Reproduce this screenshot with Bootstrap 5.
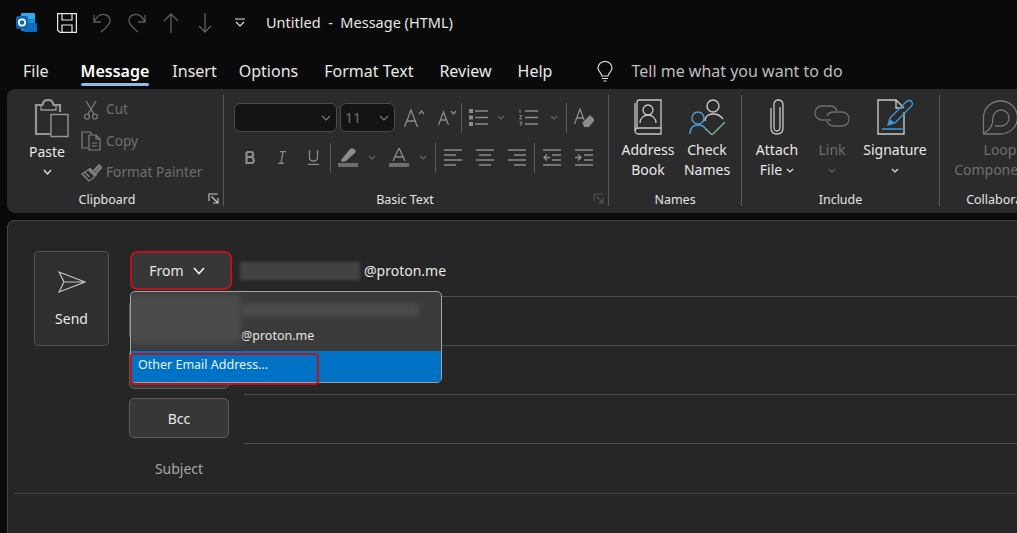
<!DOCTYPE html>
<html lang="en">
<head>
    <meta charset="UTF-8">
    <meta name="viewport" content="width=device-width, initial-scale=1.0">
    <title>Untitled - Message (HTML)</title>
    <link href="https://cdn.jsdelivr.net/npm/bootstrap@5.3.0/dist/css/bootstrap.min.css" rel="stylesheet">
    <style>
        html, body { height: 100%; }
        body {
            background: #0a0a0a;
            color: #e8e8e8;
            font-family: "Noto Sans", "Open Sans", sans-serif;
            font-size: 14px;
            overflow: hidden;
        }
        svg { display: block; flex: none; }
        /* title bar */
        .title-bar { height: 45px; padding-left: 16px; }
        .qa-cell { display: flex; justify-content: center; }
        .qa-logo { width: 21px; margin-right: 20px; }
        .qa-save { width: 20px; margin-right: 16px; }
        .qa-undo { width: 18px; margin-right: 17px; }
        .qa-up { width: 16px; margin-right: 19px; }
        .qa-down { width: 14px; margin-right: 23px; }
        .qa-more { width: 10px; margin-right: 21px; }
        .title-text { font-size: 14.5px; white-space: pre; color: #e6e6e6; }
        /* tabs */
        .tab-bar { height: 44px; padding-left: 23px; font-size: 16px; }
        .tab-item { color: #e8e8e8; height: 100%; display: flex; align-items: center; position: relative; margin-right: 26px; padding-top: 8px; }
        .tab-file { margin-right: 32px; }
        .tab-msg { margin-right: 23px; }
        .tab-ins { margin-right: 22px; }
        .tab-active { font-weight: 600; color: #fff; }
        .tab-active::after { content: ""; position: absolute; left: 0; right: 0; bottom: 3px; height: 3px; background: #8fbde6; border-radius: 2px; }
        .tab-help { margin-right: 45px; }
        .tab-bulb { margin-top: 8px; }
        .tell-me { color: #bdbdbd; margin-left: 18px; padding-top: 8px; }
        /* ribbon */
        .ribbon { height: 124px; margin-left: 7px; background: #2b2b2b; border-radius: 8px 0 0 8px; overflow: hidden; }
        .grp { display: flex; flex-direction: column; flex: none; }
        .grp-clip { width: 216px; }
        .grp-basic { width: 384px; }
        .grp-names { width: 132px; }
        .grp-incl { width: 197px; }
        .grp-collab { width: 120px; }
        .grp-sep { width: 1px; height: 111px; margin-top: 6px; background: #5a5a5a; flex: none; }
        .grp-body { flex: 1; display: flex; min-height: 0; }
        .grp-label { height: 23px; padding-top: 1px; line-height: 18px; font-size: 12.5px; text-align: center; color: #e4e4e4; position: relative; }
        .label-clip { padding-right: 16px; }
        .label-basic { padding-right: 22px; }
        .launcher { position: absolute; top: 3px; right: 4px; }
        .big-btn { display: flex; flex-direction: column; align-items: center; padding-top: 10px; line-height: 20px; text-align: center; color: #e8e8e8; flex: none; }
        .big-icon { height: 41px; display: flex; align-items: flex-start; justify-content: center; }
        .is-off { color: #6e6e6e; }
        .chev-row { height: 20px; display: flex; align-items: center; justify-content: center; gap: 4px; }
        .paste-btn { width: 60px; margin-left: 10px; }
        .paste-btn .big-icon { height: 43px; padding-left: 8px; }
        .small-btns { padding-top: 5px; }
        .small-btn { height: 31.5px; display: flex; align-items: center; gap: 5px; color: #6e6e6e; padding-left: 4px; font-size: 13.7px; }
        .small-icon { width: 20px; display: flex; justify-content: center; }
        .basic-body { flex-direction: column; padding: 14px 0 0 10px; gap: 11px; }
        .tool-row { height: 29px; display: flex; align-items: center; }
        .font-box { height: 29px; background: #141414; border: 1px solid #4a4a4a; border-radius: 6px; display: flex; align-items: center; justify-content: space-between; padding: 0 5px 0 4px; color: #6e6e6e; font-size: 14px; }
        .font-name { width: 103px; margin-right: 3px; justify-content: flex-end; }
        .font-size { width: 55px; }
        .tool { height: 29px; display: flex; align-items: center; justify-content: center; flex: none; }
        .t-1 { width: 1px; } .t-5 { width: 5px; } .t-6 { width: 6px; } .t-12 { width: 12px; } .t-13 { width: 13px; } .t-14 { width: 14px; }
        .t-28 { width: 28px; } .t-30 { width: 30px; } .t-31 { width: 31px; } .t-32 { width: 32px; }
        .t-34 { width: 34px; } .t-38 { width: 38px; } .t-40 { width: 40px; }
        .tool-sep { width: 1px; height: 30px; background: #5a5a5a; flex: none; }
        .names-a { width: 68px; margin-left: 5px; }
        .names-b { width: 48px; margin-left: 1px; }
        .incl-a { width: 56px; margin-left: 7px; }
        .incl-b { width: 54px; }
        .incl-b .big-icon svg { margin-top: 5px; }
        .incl-c { width: 70px; margin-left: 1px; }
        .loop-btn { width: 120px; }
        .loop-word { margin-right: 14px; }
        /* compose pane */
        .compose { position: relative; height: 320px; margin: 7px 0 0 7px; background: #262626; border: 1px solid #474747; border-right: 0; border-radius: 8px 0 0 0; display: flex; flex-direction: column; }
        .compose-top { display: flex; padding-top: 27px; }
        .send-col { width: 122px; flex: none; padding: 3px 0 0 26px; }
        .send-btn { width: 75px; height: 95px; padding: 0; background: #2f2f2f; border: 1px solid #525252; border-radius: 4px; color: #e8e8e8; display: flex; flex-direction: column; align-items: center; }
        .send-btn span { margin-top: 15px; font-size: 14px; }
        .send-btn svg { margin-top: 19px; }
        .fields { flex: 1; position: relative; }
        .field-row { height: 49px; display: flex; padding-top: 3px; }
        .field-slot { width: 115px; flex: none; margin-left: -1px; }
        .addr-btn { width: 100px; height: 40px; padding: 0; background: #373737; border: 1px solid #5c5c5c; border-radius: 5px; color: #e8e8e8; font-size: 14px; display: flex; align-items: center; justify-content: center; gap: 9px; }
        .from-btn { width: 102px; height: 39px; margin-left: 1px; padding-right: 8px; background: #373737; border: 2px solid #b5161c; border-radius: 7px; }
        .field-value { flex: 1; border-bottom: 1px solid #4e4e4e; display: flex; align-items: center; padding-bottom: 6px; }
        .blur-from { width: 120px; height: 18px; background: #424242; filter: blur(1.5px); margin: 0 4px 0 -4px; }
        .subject-row { height: 49px; padding-top: 0; align-items: center; color: #a8a8a8; }
        .subject-label { width: 100px; margin-left: -1px; text-align: center; }
        .subject-rule { height: 1px; background: #454545; margin-left: 6px; }
        .from-menu { position: absolute; left: 0; top: 43px; width: 312px; height: 92px; background: #3a3a3a; border: 1px solid #a2a2a2; border-radius: 5px; }
        .menu-account { height: 59px; display: flex; position: relative; overflow: hidden; border-radius: 4px 4px 0 0; align-items: flex-end; padding: 0 0 6px 110px; font-size: 12.5px; line-height: 18px; color: #e4e4e4; }
        .blur-a { position: absolute; left: -2px; top: 2px; width: 112px; height: 50px; background: #4b4b4b; filter: blur(3px); }
        .blur-b { position: absolute; left: 110px; top: 12px; width: 178px; height: 12px; background: #4d4d4d; filter: blur(3px); }
        .menu-other { height: 31px; background: #0072c6; color: #e8f3fb; font-size: 12.5px; padding: 5px 0 0 7px; line-height: 18px; border-radius: 0 0 4px 4px; }
        .red-mark { position: absolute; left: -1px; top: 61px; width: 189px; height: 32px; border: 2px solid #b5161c; border-radius: 4px; pointer-events: none; }
    </style>
</head>
<body>
    <!-- title bar -->
    <div class="title-bar d-flex align-items-center">
        <div class="qa-cell qa-logo">
            <svg width="21" height="21" viewBox="0 0 21 21"><rect x="5" y="1" width="14" height="18" rx="1.5" fill="#1b8ad6"/><rect x="5" y="1" width="14" height="6" fill="#35a8ea"/><rect x="8" y="11" width="13" height="9" rx="1" fill="#0f6cbd"/><rect x="0" y="4" width="12" height="13" rx="2" fill="#0d63ae"/><circle cx="6" cy="10.5" r="3.2" fill="none" stroke="#fff" stroke-width="1.8"/></svg>
        </div>
        <div class="qa-cell qa-save">
            <svg width="20" height="20" viewBox="0 0 20 20" fill="none" stroke="#e6e6e6" stroke-width="1.2"><path d="M.6.6H19.4V19.4H3L.6 17Z"/><path d="M5 .6V7H15V.6M5 19.4V12H15V19.4"/></svg>
        </div>
        <div class="qa-cell qa-undo">
            <svg width="18" height="20" viewBox="0 0 18 20" fill="none" stroke="#5e5e5e" stroke-width="1.3"><path d="M1 2V9H8M1 9C4 3 8 1 11 1.500C15 2 17 5 17 8C17 11 14 14 8 19"/></svg>
        </div>
        <div class="qa-cell qa-undo">
            <svg width="18" height="20" viewBox="0 0 18 20" fill="none" stroke="#5e5e5e" stroke-width="1.3"><path d="M17 2V9H10M17 9C14 3 10 1 7 1.500C3 2 1 5 1 8C1 11 4 14 10 19"/></svg>
        </div>
        <div class="qa-cell qa-up">
            <svg width="16" height="20" viewBox="0 0 16 20" fill="none" stroke="#5e5e5e" stroke-width="1.3"><path d="M8 20V1M1 8L8 1L15 8"/></svg>
        </div>
        <div class="qa-cell qa-down">
            <svg width="14" height="20" viewBox="0 0 14 20" fill="none" stroke="#5e5e5e" stroke-width="1.3"><path d="M7 0V19M1 13L7 19L13 13"/></svg>
        </div>
        <div class="qa-cell qa-more">
            <svg width="10" height="9" viewBox="0 0 10 9" fill="none" stroke="#e0e0e0" stroke-width="1.2"><path d="M0 1H10M1 4L5 8L9 4"/></svg>
        </div>
        <div class="title-text">Untitled  -  Message (HTML)</div>
    </div>

    <!-- tabs -->
    <div class="tab-bar d-flex align-items-center">
        <div class="tab-item tab-file">File</div>
        <div class="tab-item tab-active tab-msg">Message</div>
        <div class="tab-item tab-ins">Insert</div>
        <div class="tab-item">Options</div>
        <div class="tab-item">Format Text</div>
        <div class="tab-item">Review</div>
        <div class="tab-item tab-help">Help</div>
        <svg class="tab-bulb" width="16" height="21" viewBox="0 0 16 21" fill="none" stroke="#e0e0e0" stroke-width="1.2"><path d="M5 15C5 12 1 11 1 7A7 6.500 0 0 1 15 7C15 11 11 12 11 15ZM5 17.500H11M6.500 20H9.500"/></svg>
        <div class="tell-me">Tell me what you want to do</div>
    </div>

    <!-- ribbon -->
    <div class="ribbon d-flex">
        <div class="grp grp-clip">
            <div class="grp-body">
                <div class="big-btn paste-btn">
                    <div class="big-icon">
                        <svg width="36" height="39" viewBox="0 0 36 39" fill="none" stroke="#969696"><path d="M17 35H3V6H9.500C10 3 12 1 15 1C18 1 20 3 20.500 6H27V13" stroke-width="2.200"/><path d="M8 6.500V11H23V6.500" stroke-width="1.300"/><rect x="18" y="15.500" width="17" height="22" stroke-width="1.400"/></svg>
                    </div>
                    <div>Paste</div>
                    <div class="chev-row"><svg width="9" height="6" viewBox="0 0 9 6" fill="none" stroke="#e0e0e0" stroke-width="1.300"><path d="M1 1L4.500 5L8 1"/></svg></div>
                </div>
                <div class="small-btns">
                    <div class="small-btn">
                        <div class="small-icon"><svg width="14" height="20" viewBox="0 0 14 20" fill="none" stroke="#808080" stroke-width="1.200"><path d="M2 1L10 14M12 1L4 14"/><circle cx="3" cy="16.500" r="2.500"/><circle cx="11" cy="16.500" r="2.500"/></svg></div>
                        <span>Cut</span>
                    </div>
                    <div class="small-btn">
                        <div class="small-icon"><svg width="20" height="20" viewBox="0 0 20 20" fill="none" stroke="#808080" stroke-width="1.200"><path d="M7 17H1V1H9L11 3"/><path d="M8 4H15L19 8V19H8ZM15 4V8H19M11 12H16M11 15H16"/></svg></div>
                        <span>Copy</span>
                    </div>
                    <div class="small-btn">
                        <div class="small-icon"><svg width="21" height="19" viewBox="0 0 21 19" fill="none" stroke="#808080"><path d="M13 8L18 2.500L20 4.500L15 10" stroke-width="2.400"/><path d="M9 5L16 11.500L14 13.500L7 7Z" fill="#808080" stroke-width="1"/><path d="M7 7L1 11L8 18L14 13.500M4 9.500L8.500 14M3 12.500L6 15.500" stroke-width="1.300"/></svg></div>
                        <span>Format Painter</span>
                    </div>
                </div>
            </div>
            <div class="grp-label label-clip">Clipboard
                <svg class="launcher" width="11" height="11" viewBox="0 0 11 11" fill="none" stroke="#c8c8c8" stroke-width="1.100"><path d="M1 8V1H10M3.500 3.500L9.500 9.500M10 5V10H5"/></svg>
            </div>
        </div>
        <div class="grp-sep"></div>

        <div class="grp grp-basic">
            <div class="grp-body basic-body">
                <div class="tool-row">
                    <div class="font-box font-name"><svg width="10" height="6" viewBox="0 0 10 6" fill="none" stroke="#777" stroke-width="1.200"><path d="M1 1L5 5L9 1"/></svg></div>
                    <div class="font-box font-size"><span>11</span><svg width="10" height="6" viewBox="0 0 10 6" fill="none" stroke="#777" stroke-width="1.200"><path d="M1 1L5 5L9 1"/></svg></div>
                    <div class="tool t-38"><svg width="20" height="18" viewBox="0 0 20 18" fill="none" stroke="#8c8c8c" stroke-width="1.300"><path d="M0.500 18L7 1L13.500 18M3 12H11M15 5L17.500 2L20 5"/></svg></div>
                    <div class="tool t-28"><svg width="18" height="15" viewBox="0 0 18 15" fill="none" stroke="#8c8c8c" stroke-width="1.300"><path d="M0.500 15L5.500 2L10.500 15M2.500 10H8.500M13 1L15.500 4L18 1"/></svg></div>
                    <div class="tool-sep"></div>
                    <div class="tool t-32"><svg width="19" height="17" viewBox="0 0 19 17" fill="none"><path d="M6 2H19M6 8.500H19M6 15H19" stroke="#8c8c8c" stroke-width="1.300"/><path d="M0 0H4V4H0ZM0 6.500H4V10.500H0ZM0 13H4V17H0Z" fill="#8c8c8c"/></svg></div>
                    <div class="tool t-14"><svg width="8" height="5" viewBox="0 0 8 5" fill="none" stroke="#666" stroke-width="1.100"><path d="M1 1L4 4L7 1"/></svg></div>
                    <div class="tool t-40"><svg width="19" height="17" viewBox="0 0 19 17" fill="none"><path d="M6 2H19M6 8.500H19M6 15H19" stroke="#8c8c8c" stroke-width="1.300"/><path d="M1 .5V4M.5 6.500H3L.5 10H3M.5 13H3L1.500 15H3L.5 17" stroke="#8c8c8c" stroke-width=".9"/></svg></div>
                    <div class="tool t-12"><svg width="8" height="5" viewBox="0 0 8 5" fill="none" stroke="#666" stroke-width="1.100"><path d="M1 1L4 4L7 1"/></svg></div>
                    <div class="tool t-6"></div>
                    <div class="tool-sep"></div>
                    <div class="tool t-34"><svg width="20" height="19" viewBox="0 0 20 19" fill="none" stroke="#8c8c8c" stroke-width="1.300"><path d="M0.500 16L6 1L10 12M2.500 10H9"/><path d="M11 19L9 15L16 8L20 12L14 19Z" fill="#8c8c8c"/></svg></div>
                </div>
                <div class="tool-row">
                    <div class="tool t-32"><svg width="10" height="13" viewBox="0 0 10 13" fill="none" stroke="#8c8c8c" stroke-width="2.200"><path d="M1.500 1H6C8 1 8.500 3 8 4.500C7.500 6 6 6 4 6H1.500M1.500 1V12H6.500C8.500 12 9 10 8.800 9C8.500 7 7 6 5 6"/></svg></div>
                    <div class="tool t-31"><svg width="8" height="13" viewBox="0 0 8 13" fill="none" stroke="#8c8c8c" stroke-width="1.200"><path d="M2 .6H8M5 .6L3 12.400M0 12.400H6"/></svg></div>
                    <div class="tool t-32"><svg width="11" height="15" viewBox="0 0 11 15" fill="none" stroke="#8c8c8c" stroke-width="1.300"><path d="M1.500 0V7.500C1.500 10 3 11 5.500 11C8 11 9.500 10 9.500 7.500V0M0 14.300H11"/></svg></div>
                    <div class="tool t-1"></div>
                    <div class="tool-sep"></div>
                    <div class="tool t-34"><svg width="20" height="19" viewBox="0 0 20 19"><path d="M3 12L12 1C13 0 15 0 16 1L17 2C18 3 18 4 17 5L8 13L4 14Z" fill="#8c8c8c"/><rect y="15" width="20" height="4" fill="#6e6e6e"/></svg></div>
                    <div class="tool t-13"><svg width="8" height="5" viewBox="0 0 8 5" fill="none" stroke="#666" stroke-width="1.100"><path d="M1 1L4 4L7 1"/></svg></div>
                    <div class="tool t-34 ms-1"><svg width="20" height="19" viewBox="0 0 20 19"><path d="M4 13L10 0L16 13M6 9H14" fill="none" stroke="#8c8c8c" stroke-width="1.300"/><rect y="15" width="20" height="4" fill="#6e6e6e"/></svg></div>
                    <div class="tool t-14"><svg width="8" height="5" viewBox="0 0 8 5" fill="none" stroke="#666" stroke-width="1.100"><path d="M1 1L4 4L7 1"/></svg></div>
                    <div class="tool t-5"></div>
                    <div class="tool-sep"></div>
                    <div class="tool t-34"><svg width="18" height="17" viewBox="0 0 18 17" stroke="#8c8c8c" stroke-width="1.500"><path d="M0 1H18M0 6H12M0 11H18M0 16H12"/></svg></div>
                    <div class="tool t-30"><svg width="18" height="17" viewBox="0 0 18 17" stroke="#8c8c8c" stroke-width="1.500"><path d="M0 1H18M3 6H15M0 11H18M3 16H15"/></svg></div>
                    <div class="tool t-34"><svg width="18" height="17" viewBox="0 0 18 17" stroke="#8c8c8c" stroke-width="1.500"><path d="M0 1H18M6 6H18M0 11H18M6 16H18"/></svg></div>
                    <div class="tool-sep"></div>
                    <div class="tool t-34"><svg width="18" height="17" viewBox="0 0 18 17" fill="none" stroke="#8c8c8c" stroke-width="1.400"><path d="M0 1H18M9 6H18M9 11H18M0 16H18M7 8.500H1M4 5.500L1 8.500L4 11.500"/></svg></div>
                    <div class="tool t-30"><svg width="18" height="17" viewBox="0 0 18 17" fill="none" stroke="#8c8c8c" stroke-width="1.400"><path d="M0 1H18M9 6H18M9 11H18M0 16H18M0 8.500H6M3 5.500L6 8.500L3 11.500"/></svg></div>
                </div>
            </div>
            <div class="grp-label label-basic">Basic Text
                <svg class="launcher" width="11" height="11" viewBox="0 0 11 11" fill="none" stroke="#555" stroke-width="1.100"><path d="M1 8V1H10M3.500 3.500L9.500 9.500M10 5V10H5"/></svg>
            </div>
        </div>
        <div class="grp-sep"></div>

        <div class="grp grp-names">
            <div class="grp-body">
                <div class="big-btn names-a">
                    <div class="big-icon"><svg width="28" height="36" viewBox="0 0 28 36" fill="none" stroke="#c8c8c8" stroke-width="1.300"><path d="M3 29V3C3 1.500 4 1 5 1H27V35H5C3 35 1 34 1 32V4"/><path d="M1 32C1 30 3 29 5 29H27"/><circle cx="14" cy="11" r="5"/><path d="M6 24C6 19 10 16 14 16C18 16 22 19 22 24"/></svg></div>
                    <div>Address</div><div>Book</div>
                </div>
                <div class="big-btn names-b">
                    <div class="big-icon"><svg width="36" height="36" viewBox="0 0 36 36" fill="none" stroke-width="1.400"><g stroke="#c8c8c8"><circle cx="24" cy="7" r="6"/><path d="M16 22C16 17 20 15 24 15C28 15 32 17 34 20"/></g><g stroke="#4f9bd6"><circle cx="9" cy="19" r="6"/><path d="M1 35C1 29 4 26 9 26C13 26 16 28 17 31"/></g><path d="M17 30L23 36L36 23" stroke="#7fb28a"/></svg></div>
                    <div>Check</div><div>Names</div>
                </div>
            </div>
            <div class="grp-label">Names</div>
        </div>
        <div class="grp-sep"></div>

        <div class="grp grp-incl">
            <div class="grp-body">
                <div class="big-btn incl-a">
                    <div class="big-icon"><svg width="14" height="36" viewBox="0 0 14 36" fill="none" stroke="#c8c8c8" stroke-width="1.300"><path d="M10 8V28C10 31 9 32 7 32C5 32 4 31 4 28V6C4 3 5 1 8 1C11 1 13 3 13 6V29C13 33 11 35 7 35C3 35 1 33 1 29V9"/></svg></div>
                    <div>Attach</div>
                    <div class="chev-row">File <svg width="8" height="5" viewBox="0 0 8 5" fill="none" stroke="#e0e0e0" stroke-width="1.200"><path d="M1 1L4 4L7 1"/></svg></div>
                </div>
                <div class="big-btn incl-b is-off">
                    <div class="big-icon"><svg width="36" height="28" viewBox="0 0 36 28" fill="none" stroke="#6e6e6e" stroke-width="1.300"><path d="M17 16H8C4 16 1 13 1 9C1 5 4 2 8 2H16C20 2 22 4 23 7"/><path d="M13 12C14 9 16 8 20 8H28C32 8 35 11 35 15C35 19 32 22 28 22H20C16 22 14 20 13 17"/></svg></div>
                    <div>Link</div>
                    <div class="chev-row"><svg width="8" height="5" viewBox="0 0 8 5" fill="none" stroke="#666" stroke-width="1.100"><path d="M1 1L4 4L7 1"/></svg></div>
                </div>
                <div class="big-btn incl-c">
                    <div class="big-icon"><svg width="36" height="36" viewBox="0 0 36 36" fill="none" stroke-width="1.400"><path d="M27 13V35H1V1H19L27 9M19 1V9H25" stroke="#c8c8c8"/><path d="M11 26L13 19L29 3C31 1 33 1 34.500 2.500C36 4 35.500 6 34 7.500L18 24Z" stroke="#3f94d8"/><path d="M11 26L13 20L18 24Z" fill="#3f94d8"/><path d="M5 30H27" stroke="#3f94d8"/></svg></div>
                    <div>Signature</div>
                    <div class="chev-row"><svg width="8" height="5" viewBox="0 0 8 5" fill="none" stroke="#e0e0e0" stroke-width="1.200"><path d="M1 1L4 4L7 1"/></svg></div>
                </div>
            </div>
            <div class="grp-label">Include</div>
        </div>
        <div class="grp-sep"></div>

        <div class="grp grp-collab">
            <div class="grp-body">
                <div class="big-btn loop-btn is-off">
                    <div class="big-icon"><svg width="36" height="36" viewBox="0 0 36 36" fill="none" stroke="#777" stroke-width="1.300"><path d="M1.500 35V19A17 16.500 0 1 1 18 35Z"/><path d="M11 19C11 27 8 30 2 34.500M11 19A8 8 0 1 1 19 27H13"/></svg></div>
                    <div>Loop</div><div class="loop-word">Component</div>
                </div>
            </div>
            <div class="grp-label">Collaborate</div>
        </div>
    </div>

    <!-- compose pane -->
    <div class="compose">
        <div class="compose-top">
            <div class="send-col">
                <button class="send-btn" type="button">
                    <svg width="28" height="22" viewBox="0 0 28 22" fill="none" stroke="#c4c4c4" stroke-width="1.200"><path d="M1 1L27 11L1 21L6 11ZM6 11H27"/></svg>
                    <span>Send</span>
                </button>
            </div>
            <div class="fields">
                <div class="field-row">
                    <div class="field-slot"><button class="addr-btn from-btn" type="button">From <svg width="12" height="8" viewBox="0 0 12 8" fill="none" stroke="#f0f0f0" stroke-width="1.600"><path d="M1 1L6 6.500L11 1"/></svg></button></div>
                    <div class="field-value"><div class="blur-from"></div>@proton.me</div>
                </div>
                <!-- To and Cc sit behind the open From menu, their captions are not visible -->
                <div class="field-row">
                    <div class="field-slot"><button class="addr-btn" type="button" aria-label="To"></button></div>
                    <div class="field-value"></div>
                </div>
                <div class="field-row">
                    <div class="field-slot"><button class="addr-btn" type="button" aria-label="Cc"></button></div>
                    <div class="field-value"></div>
                </div>
                <div class="field-row">
                    <div class="field-slot"><button class="addr-btn" type="button">Bcc</button></div>
                    <div class="field-value"></div>
                </div>
                <div class="field-row subject-row">
                    <div class="subject-label">Subject</div>
                </div>
                <div class="from-menu">
                    <div class="menu-account">
                        <div class="blur-a"></div>
                        <div class="blur-b"></div>
                        <span>@proton.me</span>
                    </div>
                    <div class="menu-other">Other Email Address...</div>
                    <div class="red-mark"></div>
                </div>
            </div>
        </div>
        <div class="subject-rule"></div>
    </div>
    <script src="https://cdn.jsdelivr.net/npm/bootstrap@5.3.0/dist/js/bootstrap.bundle.min.js"></script>
</body>
</html>
